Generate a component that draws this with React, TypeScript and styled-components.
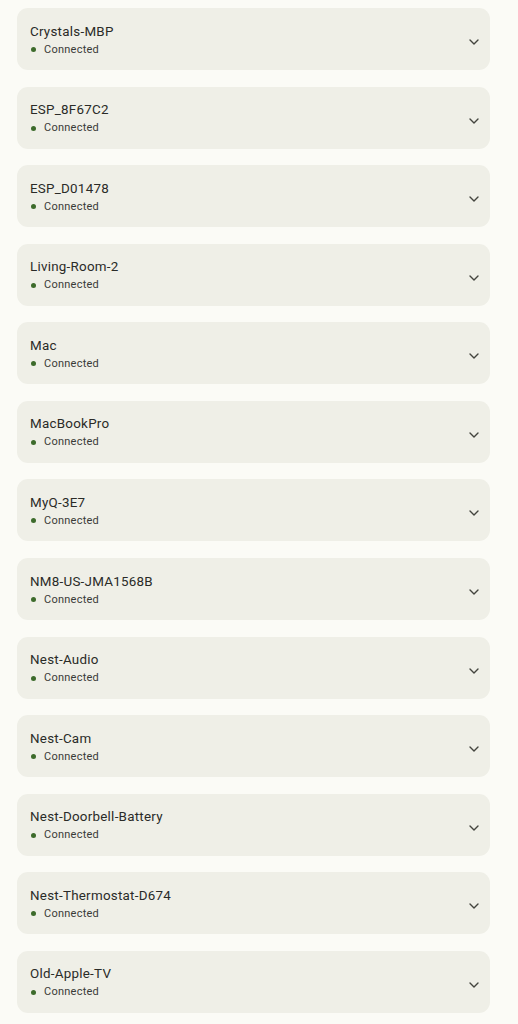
import React from "react";
import styled, { createGlobalStyle } from "styled-components";

const Global = createGlobalStyle`
  html, body { margin: 0; padding: 0; background: #fbfbf6; }
  body { font-family: Roboto, "Noto Sans", sans-serif; -webkit-font-smoothing: antialiased; }
`;

const List = styled.div`
  display: flex;
  flex-direction: column;
  gap: 16.58px;
  padding: 8px 28px 10px 17px;
`;

const Card = styled.div`
  height: 62px;
  border-radius: 11px;
  background: #efefe7;
  display: flex;
  align-items: center;
  padding: 0 10px 0 13px;
  box-sizing: border-box;
`;

const Info = styled.div`
  flex: 1;
  display: flex;
  flex-direction: column;
  gap: 3px;
  padding-top: 1px;
`;

const Name = styled.div`
  font-size: 13.4px;
  line-height: 17px;
  color: #2a2b28;
  letter-spacing: 0.25px;
`;

const Status = styled.div`
  display: flex;
  align-items: center;
  font-size: 11px;
  line-height: 14px;
  color: #3a3b37;
  letter-spacing: 0.25px;
`;

const Dot = styled.span`
  width: 5px;
  height: 5px;
  border-radius: 50%;
  background: #3d6b2c;
  margin: 0 8px 0 1px;
`;

const Chevron = styled.svg`
  width: 12px;
  height: 12px;
  margin-top: 6px;
  flex-shrink: 0;
`;

const devices = [
  "Crystals-MBP",
  "ESP_8F67C2",
  "ESP_D01478",
  "Living-Room-2",
  "Mac",
  "MacBookPro",
  "MyQ-3E7",
  "NM8-US-JMA1568B",
  "Nest-Audio",
  "Nest-Cam",
  "Nest-Doorbell-Battery",
  "Nest-Thermostat-D674",
  "Old-Apple-TV",
];

export default function App() {
  return (
    <>
      <Global />
      <List>
        {devices.map((d) => (
          <Card key={d}>
            <Info>
              <Name>{d}</Name>
              <Status>
                <Dot />
                Connected
              </Status>
            </Info>
            <Chevron viewBox="0 0 12 12" fill="none">
              <path d="M2 4 L6 8 L10 4" stroke="#44453f" strokeWidth="1.4" strokeLinecap="round" strokeLinejoin="round" />
            </Chevron>
          </Card>
        ))}
      </List>
    </>
  );
}
